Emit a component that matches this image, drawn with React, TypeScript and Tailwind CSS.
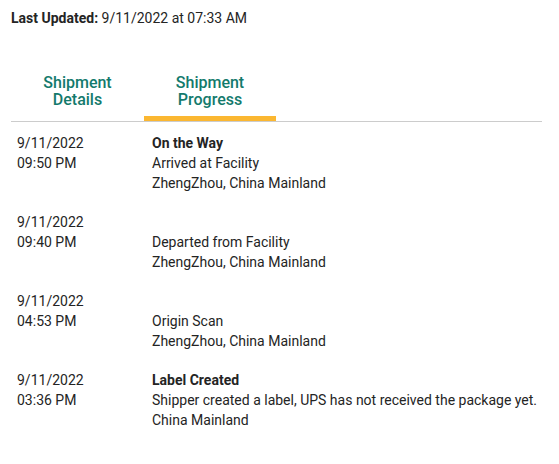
import React from 'react';

type Activity = {
  date: string;
  time: string;
  status?: string;
  lines: string[];
};

const activities: Activity[] = [
  { date: '9/11/2022', time: '09:50 PM', status: 'On the Way', lines: ['Arrived at Facility', 'ZhengZhou, China Mainland'] },
  { date: '9/11/2022', time: '09:40 PM', lines: ['Departed from Facility', 'ZhengZhou, China Mainland'] },
  { date: '9/11/2022', time: '04:53 PM', lines: ['Origin Scan', 'ZhengZhou, China Mainland'] },
  {
    date: '9/11/2022',
    time: '03:36 PM',
    status: 'Label Created',
    lines: ['Shipper created a label, UPS has not received the package yet.', 'China Mainland'],
  },
];

export default function App() {
  return (
    <div className="min-h-screen bg-white font-['Roboto',sans-serif] text-[#242424] pl-[11px] pr-[17px] pt-2">
      <p className="text-[14px] leading-5">
        <span className="font-bold">Last Updated:</span> 9/11/2022 at 07:33 AM
      </p>

      <div className="mt-[47px] flex border-b border-[#cccccc]">
        <button className="w-[133px] pb-[13px] text-center text-[16px] leading-[16.5px] font-medium text-[#137a6c]">
          Shipment
          <br />
          Details
        </button>
        <button className="w-[132px] pb-2 text-center text-[16px] leading-[16.5px] font-medium text-[#137a6c] border-b-[5px] border-[#fbb731]">
          Shipment
          <br />
          Progress
        </button>
      </div>

      <div className="pl-[6px] pt-[11px]">
        {activities.map((a, i) => (
          <div key={i} className="flex text-[14px] leading-5 mb-[19px]">
            <div className="w-[135px] shrink-0">
              <div>{a.date}</div>
              <div>{a.time}</div>
            </div>
            <div>
              <div className="font-bold">{a.status ?? '\u00a0'}</div>
              {a.lines.map((l) => (
                <div key={l}>{l}</div>
              ))}
            </div>
          </div>
        ))}
      </div>
    </div>
  );
}
